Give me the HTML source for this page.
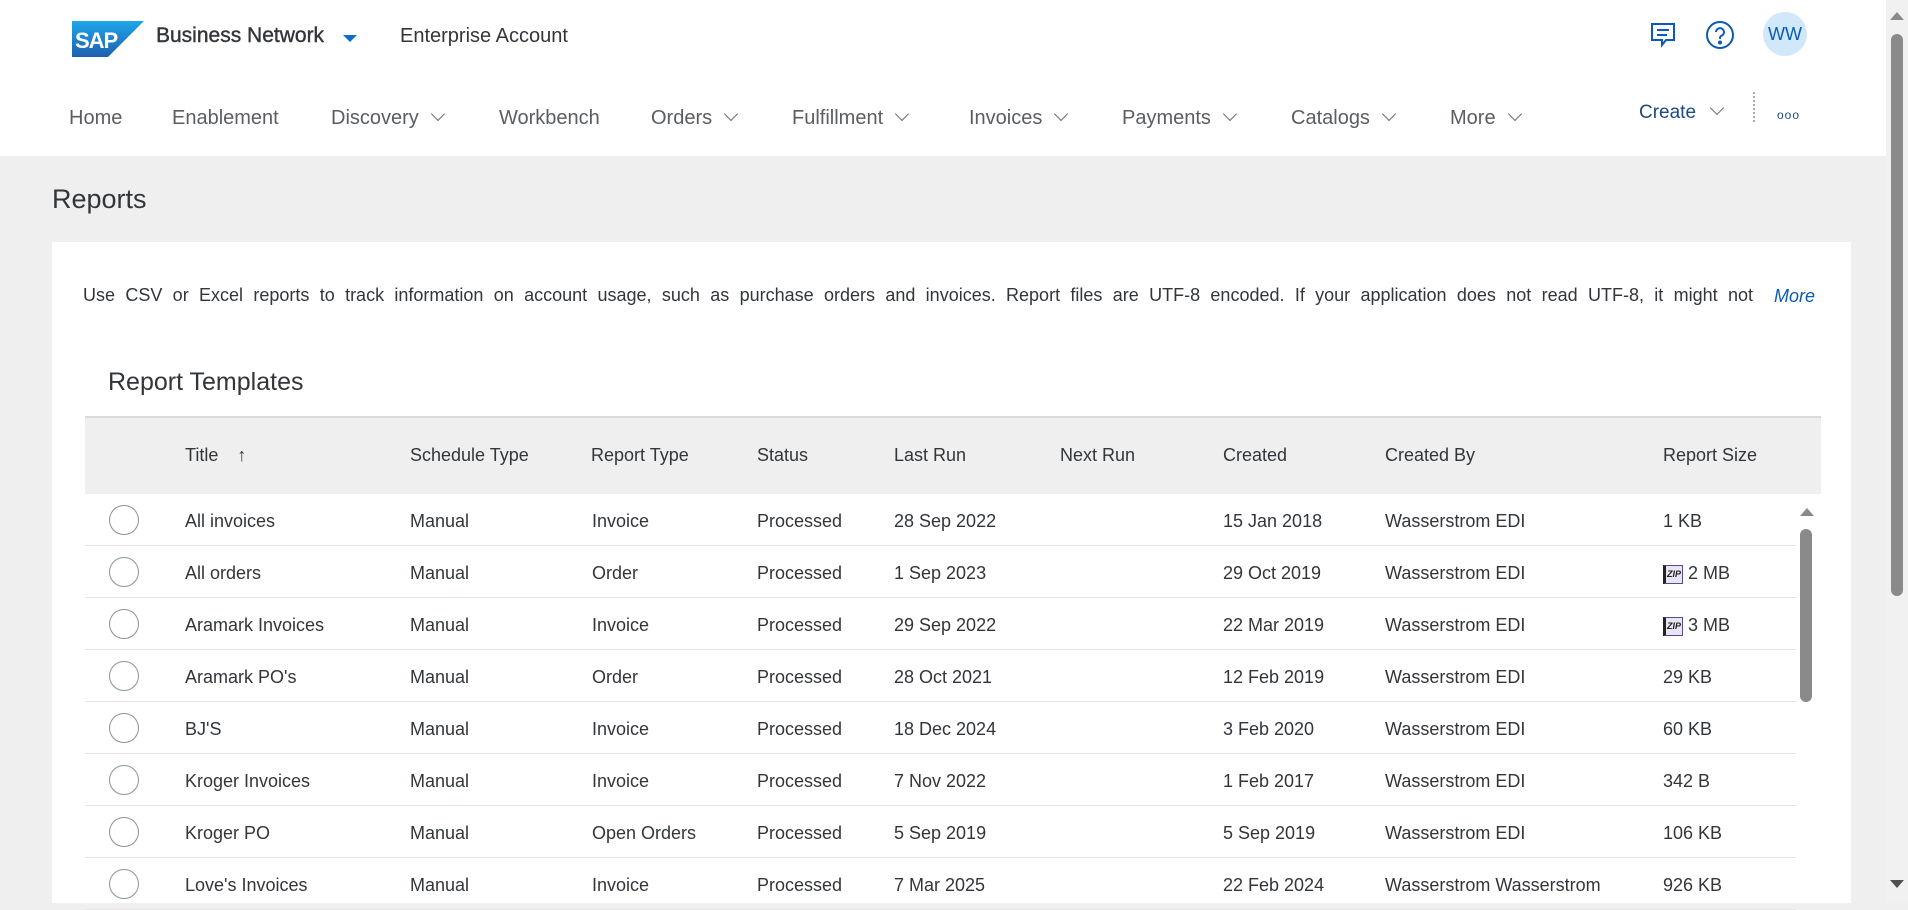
<!DOCTYPE html>
<html><head><meta charset="utf-8"><style>
*{box-sizing:border-box;margin:0;padding:0}
body{width:1908px;height:903px;overflow:hidden;background:#efefef;font-family:"Liberation Sans",Arial,sans-serif;color:#32363a;position:relative}
.hdr{position:absolute;left:0;top:0;width:1886px;height:156px;background:#fff}
.abs{position:absolute;white-space:nowrap}
.nav{top:107px;font-size:20px;color:#5a5e62}
.chev{display:inline-block;width:10px;height:10px;border-right:1.5px solid #6a6d70;border-bottom:1.5px solid #6a6d70;transform:rotate(45deg);margin-left:14px;position:relative;top:-5px}
.card{position:absolute;left:52px;top:242px;width:1799px;height:661px;background:#fff}
.th{position:absolute;top:445px;font-size:18px;color:#32363a}
.row{position:absolute;left:85px;width:1711px;height:52px;border-bottom:1px solid #e5e5e5;font-size:18px}
.row span{position:absolute;top:17px}
.radio{position:absolute;left:24px;top:11px;width:30px;height:30px;border:1px solid #89919a;border-radius:50%}
.zip{display:inline-block;width:20px;height:19px;border:1px solid #5b4a8a;border-left:3px solid #222;background:#e9e4f3;font-size:9px;font-weight:bold;line-height:16px;text-align:center;margin-right:5px;vertical-align:2px;color:#222}
</style></head><body>
<div class="hdr"></div>
<svg class="abs" style="left:72px;top:21px" width="72" height="36" viewBox="0 0 72 36"><defs><linearGradient id="g" x1="0" y1="0" x2="0" y2="1"><stop offset="0" stop-color="#1ea7e8"/><stop offset="1" stop-color="#1f5fb0"/></linearGradient></defs><polygon points="0,0 72,0 36,36 0,36" fill="url(#g)"/><text x="3" y="27" font-family="Liberation Sans" font-weight="bold" font-size="22" fill="#fff" letter-spacing="-1">SAP</text></svg>
<div class="abs" style="left:156px;top:24px;font-size:21px;color:#32363a;-webkit-text-stroke:0.4px #32363a">Business Network</div>
<svg class="abs" style="left:343px;top:35px" width="14" height="8"><polygon points="0,0 14,0 7,7" fill="#0a6ed1"/></svg>
<div class="abs" style="left:400px;top:25px;font-size:20px;color:#32363a">Enterprise Account</div>
<svg class="abs" style="left:1649px;top:21px" width="28" height="28" viewBox="0 0 28 28" fill="none" stroke="#0a5bb5" stroke-width="2"><path d="M3 3h22v16H17l-4 5v-5H3z"/><path d="M8 9h12M8 14h10"/></svg>
<svg class="abs" style="left:1705px;top:20px" width="30" height="30" viewBox="0 0 30 30" fill="none" stroke="#0a5bb5" stroke-width="2"><circle cx="15" cy="15" r="13"/><path d="M11 12a4 4 0 1 1 5 4c-1 .5-1 1.5-1 3"/><circle cx="15" cy="22.5" r="1" fill="#0a5bb5"/></svg>
<div class="abs" style="left:1763px;top:12px;width:44px;height:44px;border-radius:50%;background:#d1e8fa;color:#0a5bb5;font-size:18px;text-align:center;line-height:44px">WW</div>
<div class="abs nav" style="left:69px">Home</div>
<div class="abs nav" style="left:172px">Enablement</div>
<div class="abs nav" style="left:331px">Discovery<i class="chev"></i></div>
<div class="abs nav" style="left:499px">Workbench</div>
<div class="abs nav" style="left:651px">Orders<i class="chev"></i></div>
<div class="abs nav" style="left:792px">Fulfillment<i class="chev"></i></div>
<div class="abs nav" style="left:969px">Invoices<i class="chev"></i></div>
<div class="abs nav" style="left:1122px">Payments<i class="chev"></i></div>
<div class="abs nav" style="left:1291px">Catalogs<i class="chev"></i></div>
<div class="abs nav" style="left:1450px">More<i class="chev"></i></div>
<div class="abs" style="left:1639px;top:102px;font-size:19px;color:#1d4a80">Create<i class="chev" style="margin-left:16px"></i></div>
<div class="abs" style="left:1753px;top:92px;height:30px;border-left:2px dotted #aaa"></div>
<div class="abs" style="left:1777px;top:108px;font-size:12px;color:#1d4a80;letter-spacing:1px">ooo</div>
<div class="abs" style="left:52px;top:184px;font-size:27px;color:#32363a">Reports</div>
<div class="card"></div>
<div class="abs" style="left:83px;top:285px;width:1670px;font-size:18px;text-align:justify;text-align-last:justify;white-space:normal;height:24px;overflow:hidden">Use CSV or Excel reports to track information on account usage, such as purchase orders and invoices. Report files are UTF-8 encoded. If your application does not read UTF-8, it might not</div>
<div class="abs" style="left:1774px;top:286px;font-size:18px;font-style:italic;color:#0a5bb5">More</div>
<div class="abs" style="left:108px;top:368px;font-size:25px">Report Templates</div>
<div class="abs" style="left:85px;top:416px;width:1736px;height:78px;background:#efefef;border-top:2px solid #d9d9d9"></div>
<div class="th" style="left:185px">Title <span style="margin-left:14px;font-weight:bold">&#8593;</span></div>
<div class="th" style="left:410px">Schedule Type</div>
<div class="th" style="left:591px">Report Type</div>
<div class="th" style="left:757px">Status</div>
<div class="th" style="left:894px">Last Run</div>
<div class="th" style="left:1060px">Next Run</div>
<div class="th" style="left:1223px">Created</div>
<div class="th" style="left:1385px">Created By</div>
<div class="th" style="left:1663px">Report Size</div>

<div class="row" style="top:494px"><i class="radio"></i><span style="left:100px">All invoices</span><span style="left:325px">Manual</span><span style="left:507px">Invoice</span><span style="left:672px">Processed</span><span style="left:809px">28 Sep 2022</span><span style="left:1138px">15 Jan 2018</span><span style="left:1300px">Wasserstrom EDI</span><span style="left:1578px">1 KB</span></div>
<div class="row" style="top:546px"><i class="radio"></i><span style="left:100px">All orders</span><span style="left:325px">Manual</span><span style="left:507px">Order</span><span style="left:672px">Processed</span><span style="left:809px">1 Sep 2023</span><span style="left:1138px">29 Oct 2019</span><span style="left:1300px">Wasserstrom EDI</span><span style="left:1578px"><i class="zip">ZIP</i>2 MB</span></div>
<div class="row" style="top:598px"><i class="radio"></i><span style="left:100px">Aramark Invoices</span><span style="left:325px">Manual</span><span style="left:507px">Invoice</span><span style="left:672px">Processed</span><span style="left:809px">29 Sep 2022</span><span style="left:1138px">22 Mar 2019</span><span style="left:1300px">Wasserstrom EDI</span><span style="left:1578px"><i class="zip">ZIP</i>3 MB</span></div>
<div class="row" style="top:650px"><i class="radio"></i><span style="left:100px">Aramark PO's</span><span style="left:325px">Manual</span><span style="left:507px">Order</span><span style="left:672px">Processed</span><span style="left:809px">28 Oct 2021</span><span style="left:1138px">12 Feb 2019</span><span style="left:1300px">Wasserstrom EDI</span><span style="left:1578px">29 KB</span></div>
<div class="row" style="top:702px"><i class="radio"></i><span style="left:100px">BJ'S</span><span style="left:325px">Manual</span><span style="left:507px">Invoice</span><span style="left:672px">Processed</span><span style="left:809px">18 Dec 2024</span><span style="left:1138px">3 Feb 2020</span><span style="left:1300px">Wasserstrom EDI</span><span style="left:1578px">60 KB</span></div>
<div class="row" style="top:754px"><i class="radio"></i><span style="left:100px">Kroger Invoices</span><span style="left:325px">Manual</span><span style="left:507px">Invoice</span><span style="left:672px">Processed</span><span style="left:809px">7 Nov 2022</span><span style="left:1138px">1 Feb 2017</span><span style="left:1300px">Wasserstrom EDI</span><span style="left:1578px">342 B</span></div>
<div class="row" style="top:806px"><i class="radio"></i><span style="left:100px">Kroger PO</span><span style="left:325px">Manual</span><span style="left:507px">Open Orders</span><span style="left:672px">Processed</span><span style="left:809px">5 Sep 2019</span><span style="left:1138px">5 Sep 2019</span><span style="left:1300px">Wasserstrom EDI</span><span style="left:1578px">106 KB</span></div>
<div class="row" style="top:858px"><i class="radio"></i><span style="left:100px">Love's Invoices</span><span style="left:325px">Manual</span><span style="left:507px">Invoice</span><span style="left:672px">Processed</span><span style="left:809px">7 Mar 2025</span><span style="left:1138px">22 Feb 2024</span><span style="left:1300px">Wasserstrom Wasserstrom</span><span style="left:1578px">926 KB</span></div>

<svg class="abs" style="left:1800px;top:508px" width="14" height="8"><polygon points="0,8 7,0 14,8" fill="#8a8a8a"/></svg>
<div class="abs" style="left:1800px;top:529px;width:12px;height:173px;border-radius:6px;background:#8a8a8a"></div>
<div class="abs" style="left:1886px;top:0;width:22px;height:903px;background:#f1f1f1"></div>
<svg class="abs" style="left:1890px;top:12px" width="14" height="8"><polygon points="0,8 7,0 14,8" fill="#8a8a8a"/></svg>
<div class="abs" style="left:1891px;top:34px;width:12px;height:562px;border-radius:6px;background:#8a8a8a"></div>
<svg class="abs" style="left:1890px;top:880px" width="14" height="8"><polygon points="0,0 14,0 7,8" fill="#505050"/></svg>
</body></html>
